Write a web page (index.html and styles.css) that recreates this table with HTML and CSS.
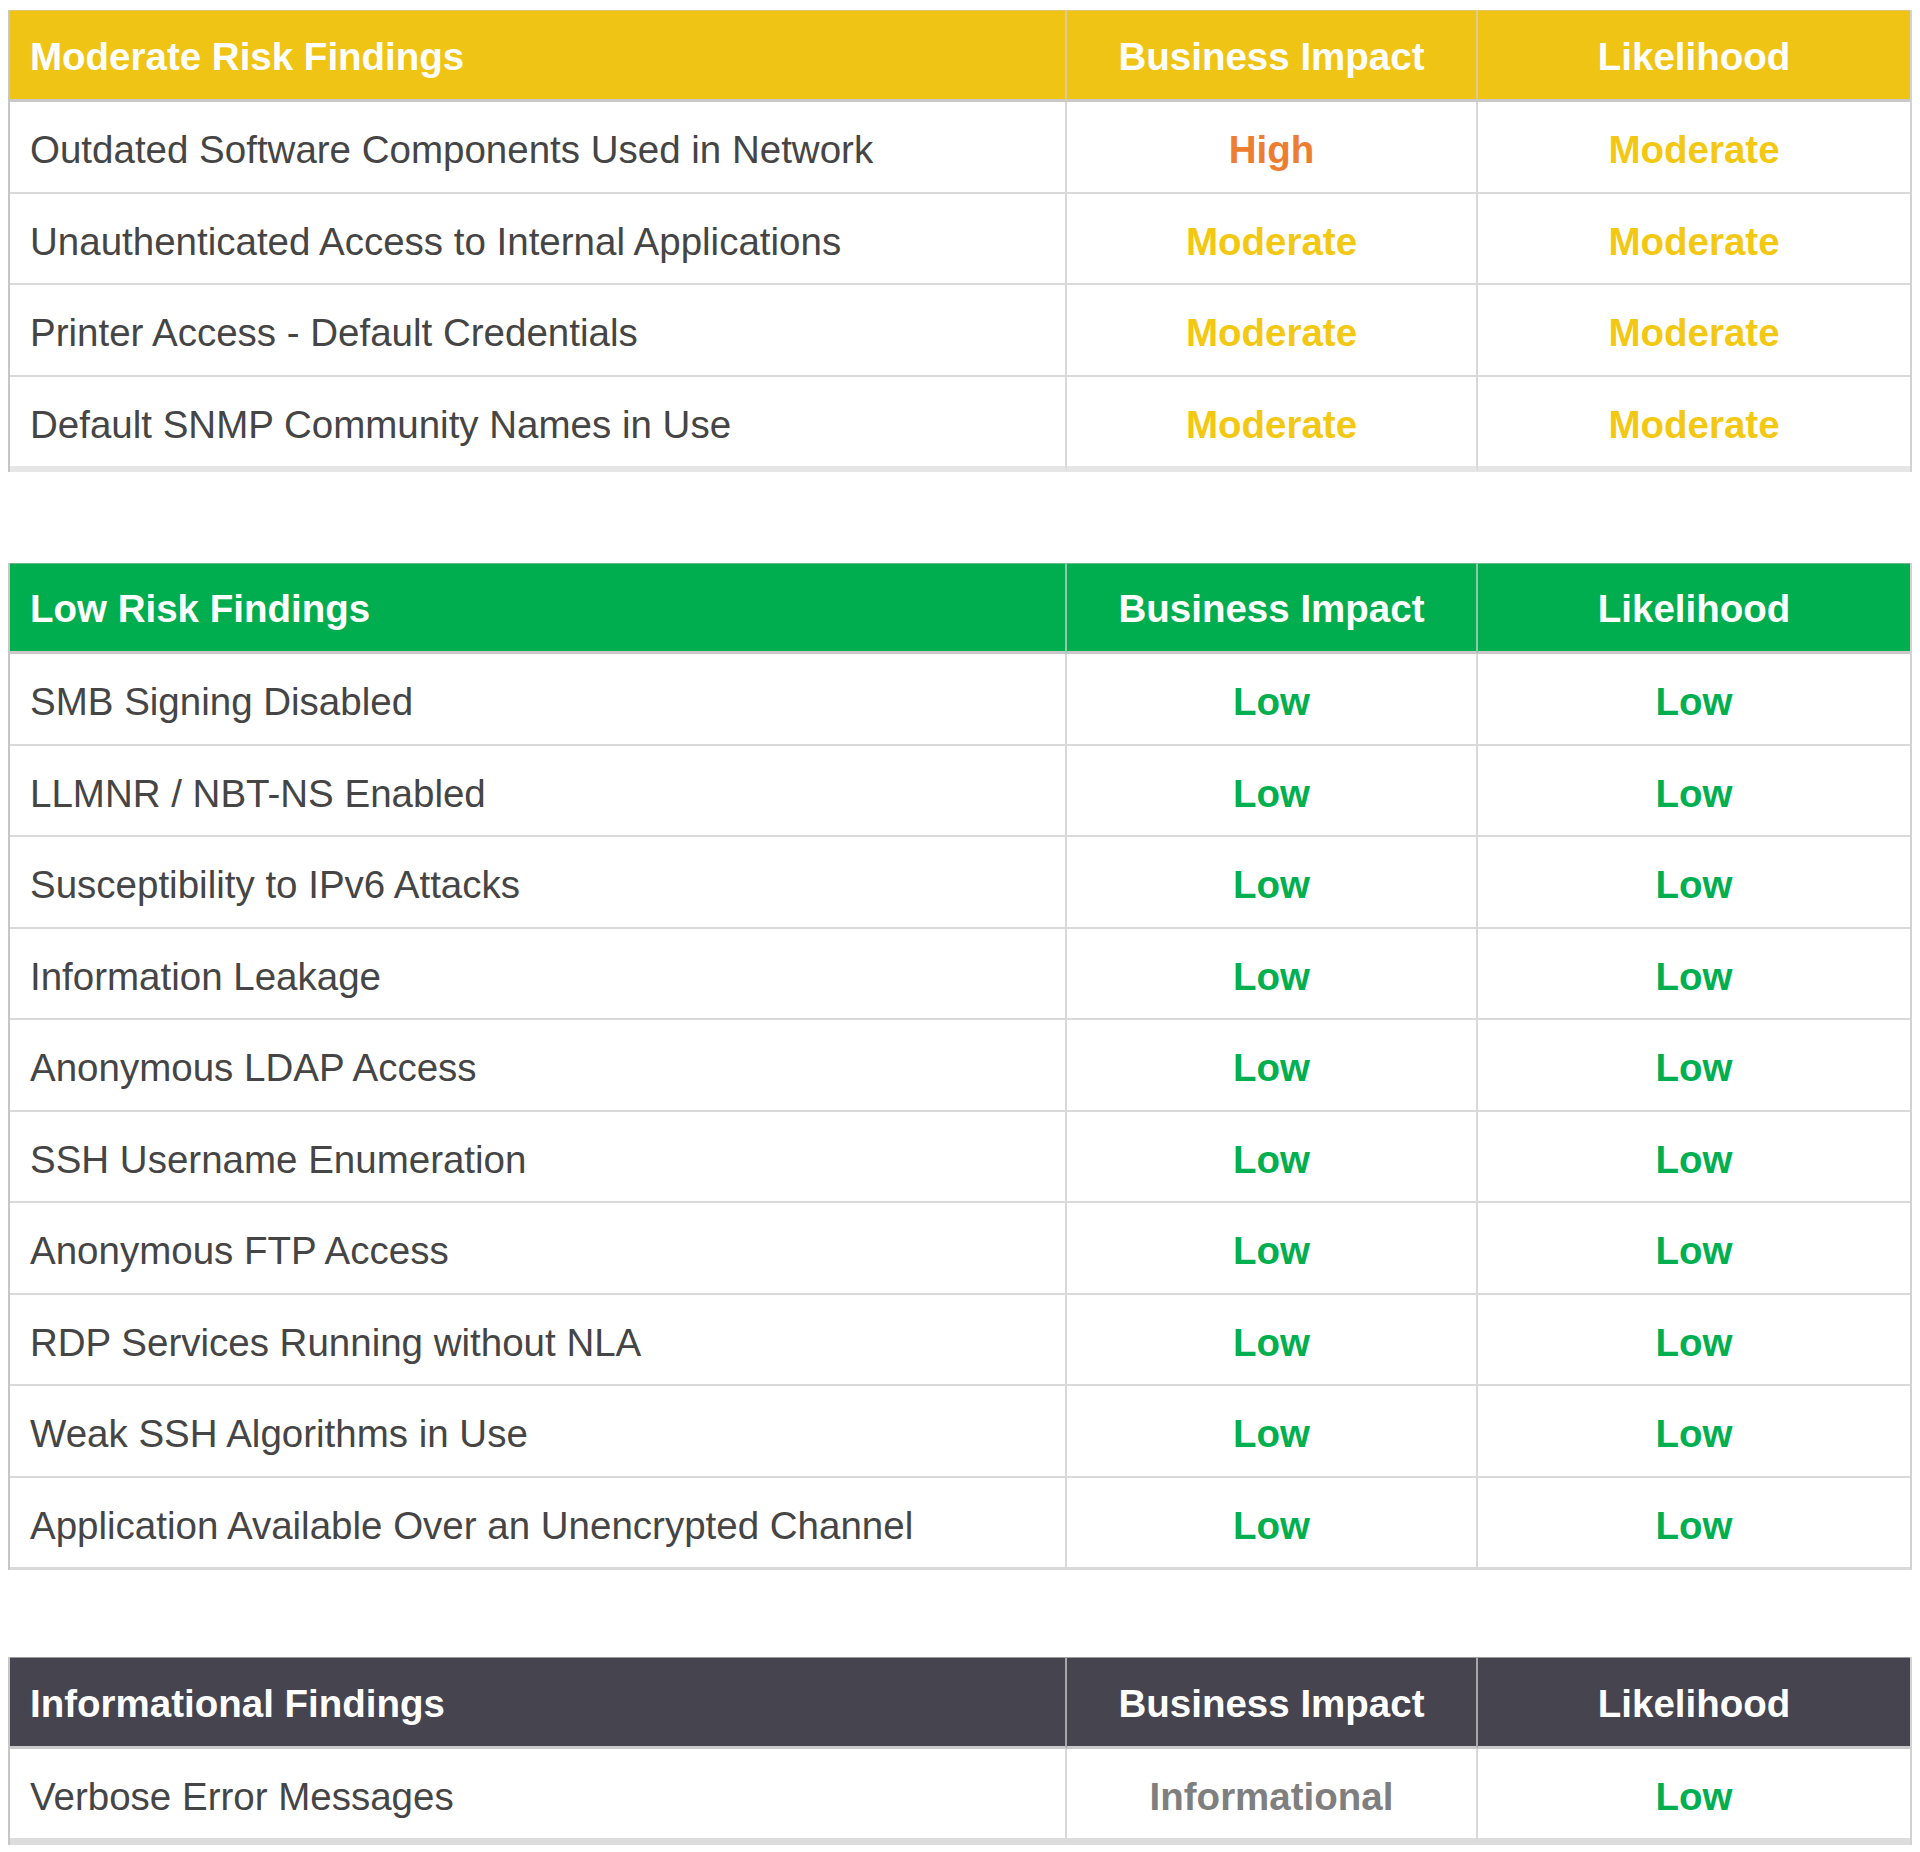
FILE: index.html
```html
<!DOCTYPE html>
<html lang="en">
<head>
<meta charset="utf-8">
<title>Risk Findings</title>
<link rel="stylesheet" href="styles.css">
</head>
<body>
<main class="page">
  <table class="findings moderate">
    <colgroup><col class="c-name"><col class="c-impact"><col class="c-like"></colgroup>
    <thead>
      <tr><th class="name">Moderate Risk Findings</th><th>Business Impact</th><th>Likelihood</th></tr>
    </thead>
    <tbody>
      <tr><td class="name">Outdated Software Components Used in Network</td><td class="val high">High</td><td class="val mod">Moderate</td></tr>
      <tr><td class="name">Unauthenticated Access to Internal Applications</td><td class="val mod">Moderate</td><td class="val mod">Moderate</td></tr>
      <tr><td class="name">Printer Access - Default Credentials</td><td class="val mod">Moderate</td><td class="val mod">Moderate</td></tr>
      <tr><td class="name">Default SNMP Community Names in Use</td><td class="val mod">Moderate</td><td class="val mod">Moderate</td></tr>
    </tbody>
  </table>

  <table class="findings low">
    <colgroup><col class="c-name"><col class="c-impact"><col class="c-like"></colgroup>
    <thead>
      <tr><th class="name">Low Risk Findings</th><th>Business Impact</th><th>Likelihood</th></tr>
    </thead>
    <tbody>
      <tr><td class="name">SMB Signing Disabled</td><td class="val lo">Low</td><td class="val lo">Low</td></tr>
      <tr><td class="name">LLMNR / NBT-NS Enabled</td><td class="val lo">Low</td><td class="val lo">Low</td></tr>
      <tr><td class="name">Susceptibility to IPv6 Attacks</td><td class="val lo">Low</td><td class="val lo">Low</td></tr>
      <tr><td class="name">Information Leakage</td><td class="val lo">Low</td><td class="val lo">Low</td></tr>
      <tr><td class="name">Anonymous LDAP Access</td><td class="val lo">Low</td><td class="val lo">Low</td></tr>
      <tr><td class="name">SSH Username Enumeration</td><td class="val lo">Low</td><td class="val lo">Low</td></tr>
      <tr><td class="name">Anonymous FTP Access</td><td class="val lo">Low</td><td class="val lo">Low</td></tr>
      <tr><td class="name">RDP Services Running without NLA</td><td class="val lo">Low</td><td class="val lo">Low</td></tr>
      <tr><td class="name">Weak SSH Algorithms in Use</td><td class="val lo">Low</td><td class="val lo">Low</td></tr>
      <tr><td class="name">Application Available Over an Unencrypted Channel</td><td class="val lo">Low</td><td class="val lo">Low</td></tr>
    </tbody>
  </table>

  <table class="findings info">
    <colgroup><col class="c-name"><col class="c-impact"><col class="c-like"></colgroup>
    <thead>
      <tr><th class="name">Informational Findings</th><th>Business Impact</th><th>Likelihood</th></tr>
    </thead>
    <tbody>
      <tr><td class="name">Verbose Error Messages</td><td class="val inf">Informational</td><td class="val lo">Low</td></tr>
    </tbody>
  </table>
</main>
</body>
</html>
```

FILE: styles.css
```css
html, body {
  margin: 0;
  padding: 0;
  background: #ffffff;
}

.page {
  padding: 10px 8px 0 8px;
  display: flex;
  flex-direction: column;
  font-family: "Liberation Sans", Arial, sans-serif;
  font-size: 38.5px;
}

.findings {
  width: 1904px;
  table-layout: fixed;
  border-collapse: separate;
  border-spacing: 0;
  border-left: 2px solid #c6c6c6;
  border-right: 2px solid #d2d2d2;
}

.moderate { margin-bottom: 91px; }
.low { margin-bottom: 87px; }

.c-name { width: 1057px; }
.c-impact { width: 411px; }
.c-like { width: 432px; }

.findings th,
.findings td {
  box-sizing: border-box;
  padding: 0 15px;
  vertical-align: middle;
  text-align: center;
  white-space: nowrap;
  border-right: 2px solid #d9d9d9;
  border-bottom: 2px solid #d9d9d9;
}

.findings th:last-child,
.findings td:last-child {
  border-right: none;
}

.findings thead tr { height: 92px; }
.low thead tr { height: 91px; }
.findings tbody tr { height: 91.5px; }
.findings tbody tr:last-child { height: 95.5px; }
.low tbody tr:last-child { height: 92.5px; }

.findings th {
  color: #ffffff;
  font-weight: bold;
  border-bottom: 3px solid #c9c9c9;
  border-right-color: rgba(210, 210, 210, 0.7);
  padding-top: 3px;
}

.findings td {
  padding-top: 7px;
}

.findings .name {
  text-align: left;
  padding-left: 20px;
}

.findings td.name {
  color: #454545;
}

.findings td.val {
  font-weight: bold;
}

.findings tbody tr:last-child td {
  border-bottom: 6px solid #e6e6e6;
}

.low tbody tr:last-child td {
  border-bottom: 3px solid #d9d9d9;
}

.info tbody tr:last-child td {
  border-bottom: 7px solid #dcdcdc;
}

.moderate th { background: #f0c414; border-top: 1px solid #dcc56a; }
.low th { background: #00ae4f; border-top: 1px solid #6cb88c; }
.info th { background: #45444f; border-top: 1px solid #9a9a9a; }

.high { color: #ed7d31; }
.mod { color: #f3c813; }
.lo { color: #00af50; }
.inf { color: #7f7f7f; }
```
